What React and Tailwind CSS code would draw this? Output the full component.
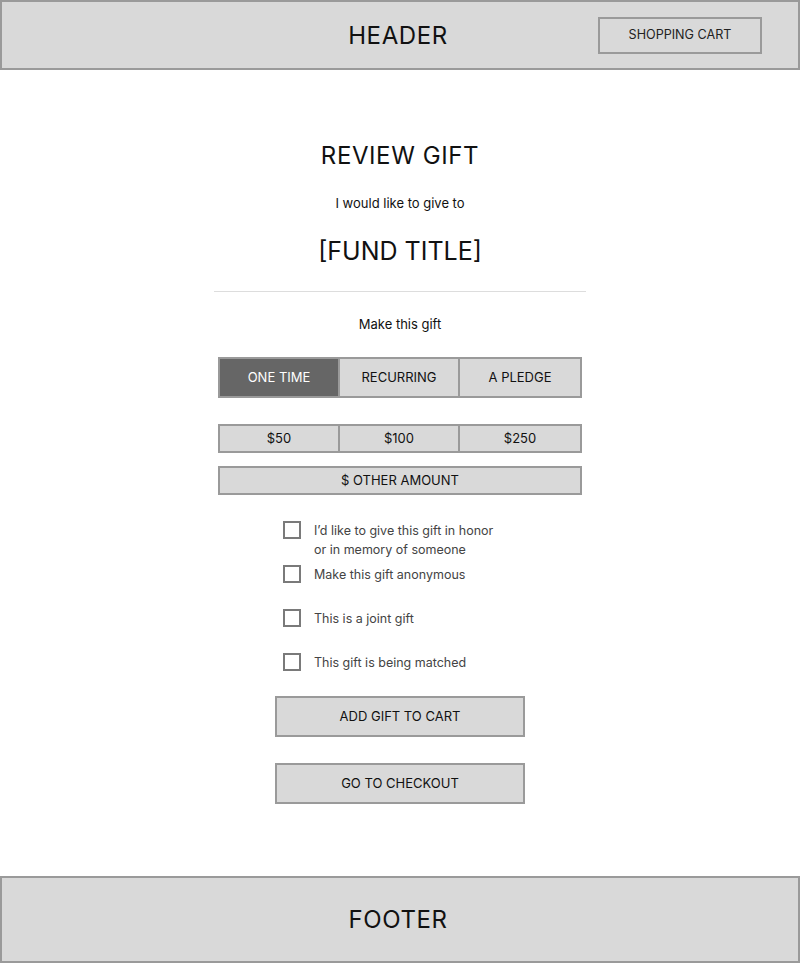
const boxBorder = "border-2 border-[#9a9a9a]";

function Checkbox({ children }) {
  return (
    <label className="flex items-start gap-[13px] h-11">
      <span className="w-[18px] h-[18px] shrink-0 border-2 border-[#7a7a7a] bg-white" />
      <span className="text-[12.5px] leading-[19px] text-[#444]">{children}</span>
    </label>
  );
}

export default function App() {
  return (
    <div className="min-h-screen flex flex-col bg-white text-[#111]" style={{ fontFamily: "Inter, 'Noto Sans', sans-serif" }}>
      {/* Header */}
      <header className={`h-[70px] ${boxBorder} bg-[#d9d9d9] relative flex items-center justify-center`}>
        <h1 className="text-[24px] leading-8 tracking-wide pr-1 pt-[2px]">HEADER</h1>
        <button className={`absolute right-[36px] top-[15px] w-[164px] h-[37px] ${boxBorder} text-[12.6px] text-[#222]`}>
          SHOPPING CART
        </button>
      </header>

      {/* Main */}
      <main className="flex-1 flex flex-col items-center pt-[70px]">
        <h2 className="text-[24px] leading-8 tracking-wide">REVIEW GIFT</h2>
        <p className="mt-[21px] text-[13px] leading-5">I would like to give to</p>
        <h3 className="mt-[22px] text-[25px] leading-8">[FUND TITLE]</h3>
        <hr className="mt-[24px] w-[372px] border-t border-[#dddddd]" />
        <p className="mt-[22px] text-[13px] leading-5">Make this gift</p>

        <div className={`mt-[23px] w-[364px] h-[41px] grid grid-cols-3 ${boxBorder} divide-x-2 divide-[#9a9a9a] text-[13px]`}>
          <button className="bg-[#666666] text-white">ONE TIME</button>
          <button className="bg-[#d9d9d9]">RECURRING</button>
          <button className="bg-[#d9d9d9]">A PLEDGE</button>
        </div>

        <div className={`mt-[26px] w-[364px] h-[29px] grid grid-cols-3 ${boxBorder} divide-x-2 divide-[#9a9a9a] bg-[#d9d9d9] text-[13px]`}>
          <button>$50</button>
          <button>$100</button>
          <button>$250</button>
        </div>

        <button className={`mt-[13px] w-[364px] h-[29px] ${boxBorder} bg-[#d9d9d9] text-[13px]`}>
          $ OTHER AMOUNT
        </button>

        <div className="mt-[26px] w-[234px] flex flex-col">
          <Checkbox>
            I’d like to give this gift in honor
            <br />
            or in memory of someone
          </Checkbox>
          <Checkbox>Make this gift anonymous</Checkbox>
          <Checkbox>This is a joint gift</Checkbox>
          <Checkbox>This gift is being matched</Checkbox>
        </div>

        <button className={`-mt-[1px] w-[250px] h-[41px] ${boxBorder} bg-[#d9d9d9] text-[13px]`}>ADD GIFT TO CART</button>
        <button className={`mt-[26px] w-[250px] h-[41px] ${boxBorder} bg-[#d9d9d9] text-[13px]`}>GO TO CHECKOUT</button>
      </main>

      {/* Footer */}
      <footer className={`h-[87px] ${boxBorder} bg-[#d9d9d9] flex items-center justify-center`}>
        <span className="text-[24px] leading-8 tracking-wide pr-1">FOOTER</span>
      </footer>
    </div>
  );
}
